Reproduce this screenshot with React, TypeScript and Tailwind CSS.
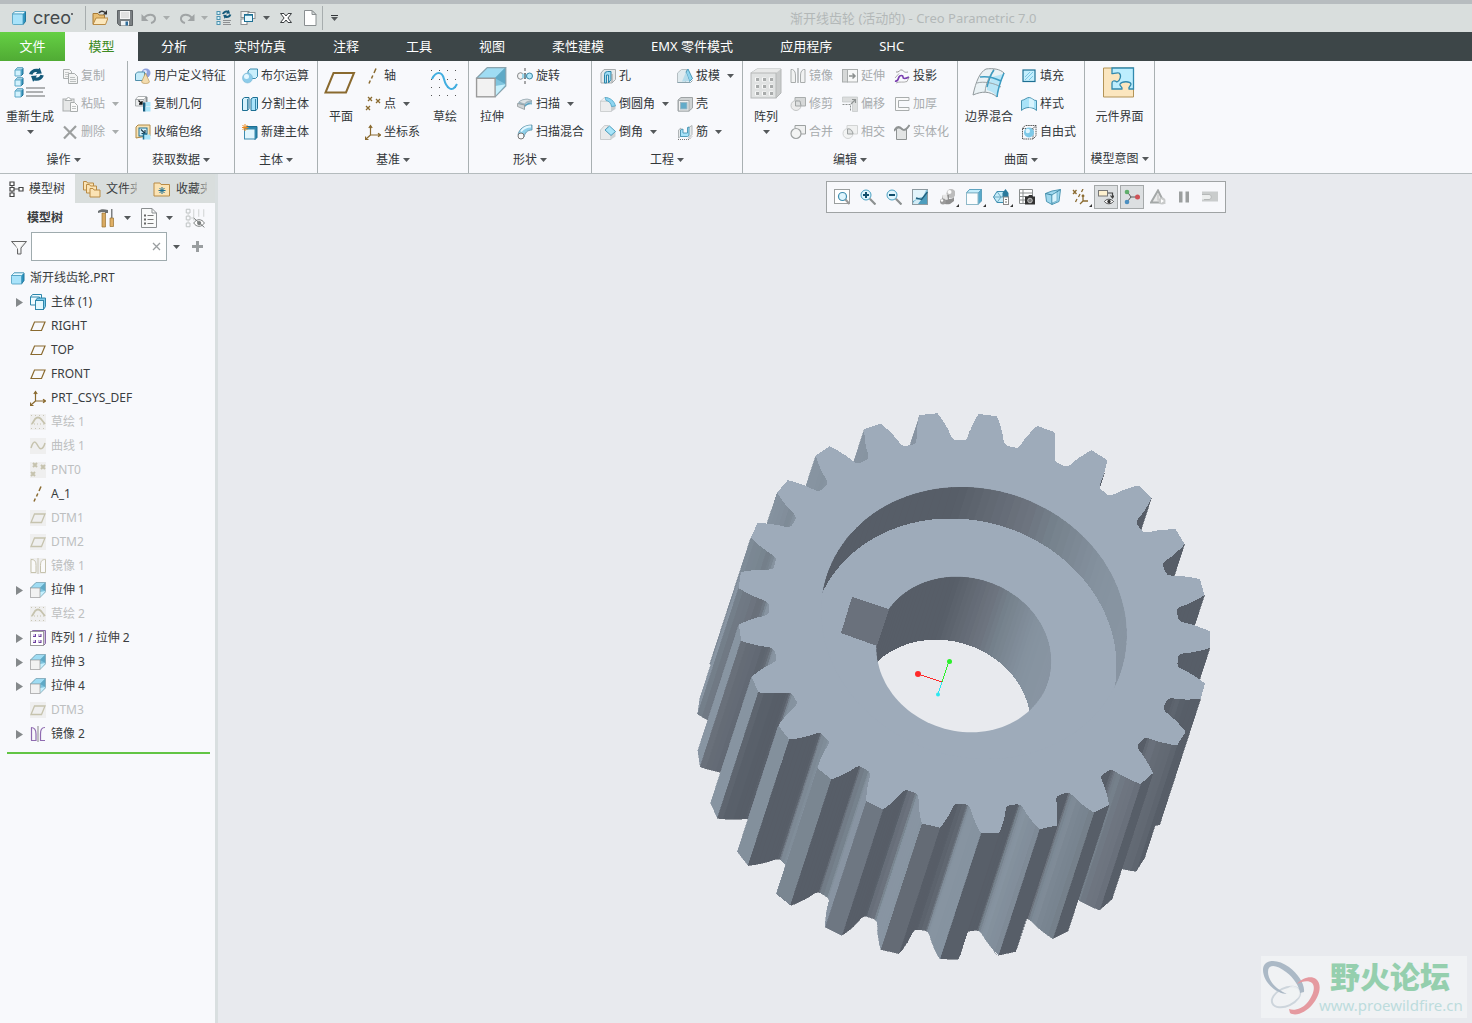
import React from 'react';

type Pt = [number, number];

/* ------------------------------------------------------------------ */
/* Icons                                                                */
/* ------------------------------------------------------------------ */

const B = '#1d6f93';
const L = '#a9e3fa';
const G = '#a9adad';
const GOLD = '#8a6a2f';
const DIM = '#c6c3ae';

function Svg({ s = 16, box = 16, children }: { s?: number; box?: number; children: React.ReactNode }) {
  return (
    <svg width={s} height={s} viewBox={`0 0 ${box} ${box}`} fill="none" className="shrink-0" aria-hidden="true">
      {children}
    </svg>
  );
}

const cubeShape = (x: number, y: number, s: number) => (
  <g stroke={B} strokeWidth="1" strokeLinejoin="round">
    <path d={`M${x} ${y + 2}l2-2h${s}v${s}l-2 2z`} fill="#3f9cc4" />
    <path d={`M${x} ${y + 2}l2-2h${s}l-2 2z`} fill="#e2f7ff" stroke="#5fa9c8" />
    <rect x={x} y={y + 2} width={s} height={s} fill="#d3f2fd" stroke="#5fa9c8" />
  </g>
);

const crosses = (c: string, w: number) => (
  <path d="M3 1l4 4M7 1l-4 4M11 3l4 4M15 3l-4 4M1 10l4 4M5 10l-4 4" stroke={c} strokeWidth={w} />
);

const refreshArrows = (
  <g fill="#155a7a">
    <path d="M0 4.500C1 1.500 4 0 7 .8l1-1 1.500 4.200-4.500.5 1-1.300C4.500 2.500 3 3.500 2.500 5z" />
    <path d="M11 5.500C10 8.500 7 10 4 9.200l-1 1L1.500 6l4.500-.5-1 1.300C6.500 7.500 8 6.500 8.500 5z" />
  </g>
);

const extrudeShape = (
  <>
    <path d="M.5 6L6 .5h9.500V10L10 15.500z" fill="#7fc4de" />
    <path d="M.5 6L6 .5h9.500L10 6z" fill="#9fdcf3" stroke="#5ba5c2" strokeWidth=".4" />
    <path d="M10 6L15.500.5V9z" fill="#5fa9c6" />
    <path d="M10 15.500V10L15.500 9z" fill="#c5f0fd" />
    <path d="M.5 6L6 .5h9.500V10L10 15.500" stroke="#8aa3ad" strokeWidth=".6" />
    <rect x=".5" y="6" width="9.500" height="9.500" fill="#f2f2f2" stroke="#9a9a9a" strokeWidth=".7" />
  </>
);

const icons: Record<string, React.ReactNode> = {
  cube: (
    <g strokeLinejoin="round">
      <path d="M1.500 4L4 1.500h10.500v10L12 14.500z" fill="#2e94c0" stroke="#21779c" />
      <path d="M1.500 4L4 1.500h10.500L12 4z" fill="#eafaff" stroke="#5aa7c6" strokeWidth=".7" />
      <rect x="1.500" y="4" width="10.500" height="10.500" rx="1" fill={L} stroke="#4a9dbf" strokeWidth=".8" />
    </g>
  ),
  part: (
    <g strokeLinejoin="round">
      <path d="M1.500 5.500L4 3h10v7.500L11.500 14z" fill="#2e94c0" stroke="#21779c" />
      <path d="M1.500 5.500L4 3h10l-2.500 2.500z" fill="#eafaff" stroke="#5aa7c6" strokeWidth=".7" />
      <rect x="1.500" y="5.500" width="10" height="8.500" rx="1" fill={L} stroke="#4a9dbf" strokeWidth=".8" />
    </g>
  ),
  folder: (
    <>
      <path d="M1 14V3.500h5l1 1.500h5.500v9z" fill="#e9bf74" stroke="#a77a35" />
      <path d="M1 14.500L4 8h12l-2.500 6.500z" fill="#fbe7bd" stroke="#b98b45" />
      <path d="M7 3c1-2 4-2.500 6-.5" stroke="#333" strokeWidth="1.500" />
      <path d="M15 0v4.500h-4z" fill="#333" />
    </>
  ),
  save: (
    <>
      <path d="M.5.5h15v15h-13l-2-2z" fill="#7b8083" stroke="#5d6265" />
      <rect x="3" y="1" width="10" height="8" fill="#f5f5f5" />
      <path d="M4 3h8M4 5h8M4 7h8" stroke="#ccc" />
      <rect x="4" y="11" width="8" height="4.500" fill="#eef2f4" />
      <rect x="8.500" y="11.500" width="2.500" height="4" fill="#2f6d9a" />
    </>
  ),
  undo: (
    <>
      <path d="M3 8c3-4.500 10-4.500 11 0 .5 2.500-1.500 4.500-4 5" stroke="#a0a4a5" strokeWidth="2" />
      <path d="M.5 4v7h7z" fill="#a0a4a5" />
    </>
  ),
  redo: (
    <>
      <path d="M13 8C10 3.500 3 3.500 2 8c-.5 2.500 1.500 4.500 4 5" stroke="#a0a4a5" strokeWidth="2" />
      <path d="M15.500 4v7h-7z" fill="#a0a4a5" />
    </>
  ),
  regenSmall: (
    <>
      <g fill="#d9f3fc" stroke="#4d93b0">
        <rect x="1" y="1.500" width="3" height="3" />
        <rect x="1" y="6.500" width="3" height="3" />
        <rect x="1" y="11.500" width="3" height="3" />
      </g>
      <g transform="translate(6 0) scale(.85)">{refreshArrows}</g>
      <path d="M7 10.500h8M7 12.500h7M7 14.500h8" stroke="#8d9092" />
    </>
  ),
  windows: (
    <>
      <rect x="1" y="1.500" width="8" height="6" fill="#eef0f0" stroke="#8a8f91" />
      <rect x="8" y="2.500" width="7" height="6" fill="#fff" stroke="#8a8f91" />
      <rect x="1" y="9" width="6" height="5.500" fill="#fff" stroke="#8a8f91" />
      <rect x="4.500" y="4.500" width="8" height="7" fill="#e2f7fe" stroke="#1d6f93" />
      <path d="M4 5h9" stroke="#1d6f93" strokeWidth="1.500" />
    </>
  ),
  closeX: (
    <path
      d="M2.500 3.500h3.500L8 6l2-2.500h3.500L9.900 8l3.600 4.500H10L8 10l-2 2.500H2.500L6.100 8z"
      fill="#fff"
      stroke="#3b3f41"
    />
  ),
  page: (
    <>
      <path d="M2.500.5h7.500l4 4v11h-11.500z" fill="#fff" stroke="#8a8f91" />
      <path d="M10 .5v4h4z" fill="#d8dcdd" stroke="#8a8f91" />
    </>
  ),
  copy: (
    <>
      <path d="M1.500 1.500h6l2 2v7h-8z" fill="#f5f5f5" stroke={G} />
      <path d="M3 4.500h4M3 6.500h4M3 8.500h3" stroke="#c8caca" />
      <path d="M6.500 5.500h6l3 3v7h-9z" fill="#f3f4f4" stroke={G} />
      <path d="M8 9.500h5M8 11.500h6M8 13.500h6" stroke="#bcc0c0" />
    </>
  ),
  paste: (
    <>
      <rect x="1" y="3" width="11" height="12" fill="#e6e7e7" stroke={G} />
      <path d="M3 4.500L6.500 1 10 4.500z" fill="#fff" stroke={G} />
      <path d="M8.500 6.500h4l3 3v6h-7z" fill="#fafafa" stroke={G} />
      <path d="M10 10.500h4M10 12.500h4" stroke="#c0c4c4" />
    </>
  ),
  del: <path d="M2 2.500l12 12M14 2L2 14.500" stroke="#9c9f9f" strokeWidth="2.200" />,
  udf: (
    <>
      <circle cx="11" cy="5" r="4.500" fill="#8fa1dd" />
      <circle cx="10" cy="4" r="2" fill="#dfe5fb" />
      <path d="M.5 6l2-2h7v7l-2 1.500h-7z" fill="#c4ebf9" stroke="#4f8fab" />
      <path d="M10.500 5l4 9c-1 2-7 2-8 0z" fill="#f3dcae" stroke="#b99659" strokeWidth=".7" />
    </>
  ),
  copyGeom: (
    <>
      <path d="M.5 3.500L3 .5h8.500L9 3.500z" fill="#fdfdfd" stroke="#9a9fa1" strokeWidth=".8" />
      <path d="M.5 3.500H9v6.500H.5z" fill="#e9ebec" stroke="#9a9fa1" strokeWidth=".8" />
      <path d="M3.500 4.500l3 3M7 5v3H4" stroke="#111" strokeWidth="1.300" />
      <rect x="8" y="6.500" width="2.500" height="9" fill="#155d80" />
      <path d="M10.500 1h2v5h-2z" fill="#8c9193" />
      <path d="M11 6h4.500v4H11zM10.500 10.500h5v5h-5z" fill="#abe6fa" />
    </>
  ),
  shrink: (
    <>
      <path d="M1 3l2-2h12v11h-3L1 14z" fill="#f8e3b5" stroke="#b08a45" />
      <rect x="4" y="4" width="8" height="8" fill="#d2f0fb" stroke={B} />
      <path d="M6 5.500l3.500 3.500M10 6v3.500H6.500" stroke="#1c3c4c" strokeWidth="1.200" />
      <rect x="9" y="10.500" width="6.500" height="5" fill="#abe6fa" />
      <path d="M8.500 15.500V10H12" stroke={B} strokeWidth="1.500" />
    </>
  ),
  bool: (
    <>
      <path d="M6 3l2-2h7.500v7.500l-2 2H6z" fill="#c9effc" stroke="#3d8db0" />
      <circle cx="5.500" cy="10" r="5" fill="#8dccea" stroke="#6fb1cf" strokeWidth=".5" />
      <circle cx="4.500" cy="8.500" r="2.500" fill="#e4f7ff" />
    </>
  ),
  split: (
    <>
      <path d="M.5 3l2-1.500H7v11L5.500 14.500h-5z" fill="#d5f1fb" stroke={B} />
      <path d="M9 3l2-1.500h4.500v11L14 14.500H9z" fill={L} stroke={B} />
      <path d="M5.500 3v11M13.500 3v11" stroke={B} strokeWidth=".8" />
    </>
  ),
  newBody: (
    <>
      <path d="M2.500 5l2-2.500h10.500v11L13 15.500z" fill="#2c86ac" stroke={B} />
      <rect x="2.500" y="5" width="10.500" height="10" fill="#e2f6fd" stroke="#3d8db0" />
      <path d="M3 0v7M-.5 3.500h7M.5 1l5 5M5.500 1l-5 5" stroke="#ee8a1e" strokeWidth="1" />
    </>
  ),
  axis: <path d="M11 .5L9 5M7.800 7.500L6.500 10.500M5.300 12.500L4 15.500" stroke={GOLD} strokeWidth="1.500" />,
  point: crosses(GOLD, 1.3),
  csys: (
    <path
      d="M5.500 11V2M5.500 11H15M5.500 11L1 15M3.800 4L5.500 1.500 7.200 4M13 9.200l2.500 1.800L13 12.800M.5 12.500v3h3"
      stroke={GOLD}
      strokeWidth="1.200"
    />
  ),
  plane: <path d="M4.500 4h10.500L11.500 12.500H1z" stroke={GOLD} strokeWidth="1.200" />,
  revolve: (
    <>
      <path d="M8 0v3M8 5v6M8 13v3" stroke="#555" />
      <ellipse cx="3.500" cy="8" rx="3" ry="3.300" fill="#f4f4f4" stroke="#85898a" />
      <path d="M5 5.500c3 1 4 1 6.500 0v5c-2.500-1-3.500-1-6.500 0" fill="#9bd6ec" />
      <circle cx="12.500" cy="8" r="3" fill="#b3e8fa" stroke="#3b87a5" />
      <path d="M8 5v6" stroke="#555" />
    </>
  ),
  sweep: (
    <>
      <path d="M2 5.500C6 2 12 2 15 4.500V8c-3-1.500-5-1-7 .5v5L1 10V7z" fill="#9dbccb" />
      <path d="M2 6C6 2.500 12 2.500 15 5c-3-.5-6 .5-7.500 3z" fill="#dde3e6" stroke="#8e989c" strokeWidth=".5" />
      <path d="M8 8.500c2-1.500 4-2 7-1V8.500c-3-.5-5 .5-7 2.500z" fill="#5aa2c0" />
      <path d="M.5 7.500l7 1.500v4.500l-7-3z" fill="#cfd4d6" stroke="#8a8f91" strokeWidth=".7" />
    </>
  ),
  blend: (
    <>
      <path d="M1 11C2 5 7 1 15 1v5c-5 0-7 3-8 7z" fill="#8fd0ea" stroke="#5a8ea3" strokeWidth=".8" />
      <path d="M4 7.500c2-3 5-5 10-5" stroke="#e4f8ff" strokeWidth="1.800" />
      <circle cx="4" cy="12" r="3" fill="#fafafa" stroke="#777" />
    </>
  ),
  hole: (
    <>
      <path d="M1 5l3-3.500h11.500v10L12 15H1z" fill="#e6e9ea" stroke="#a9adaf" />
      <path d="M4.500 15V6.500a3 3 0 0 1 3-3h3.500v8L8.500 15V7h-2v8z" fill="#9edcf4" stroke="#2b85a9" />
      <path d="M12 6v8.500" stroke="#999" />
    </>
  ),
  round: (
    <>
      <path d="M.5 5h7c2.500 0 4 2 4 4v6.500H.5z" fill="#ecedee" stroke="#c4c8c9" strokeWidth=".8" />
      <path d="M.5 5l4-3.500H8L7.500 5z" fill="#f3f4f5" stroke="#c4c8c9" strokeWidth=".6" />
      <path d="M15.500 10v3L11.500 15.500V10z" fill="#c9cdcf" />
      <path d="M5 1.500c5 0 9.500 3.500 10.500 8.500l-4 .5C11 7 9 5 6 4.500z" fill="#8ed5f1" stroke="#3f9cc0" strokeWidth=".7" />
    </>
  ),
  chamfer: (
    <>
      <path d="M.5 6l4-4.500h4L6 6l5 5v4.500H.5z" fill="#e8eaeb" stroke="#c0c4c5" strokeWidth=".8" />
      <path d="M11 15.500V11l4.500-3v4.500z" fill="#cfd3d5" />
      <path d="M9.500 2l6 5.500-4.500 4-6-5.500z" fill="#a8e5fa" stroke="#2f89ad" strokeWidth=".8" />
    </>
  ),
  draft: (
    <>
      <path d="M.5 5l4-3.500H10l-1.500 13h-8z" fill="#dfeaee" stroke="#b5bec2" />
      <path d="M.5 14.500h13l2-2" stroke="#8ba3ad" />
      <path d="M9 4l2-3 4.500 9.500-3 3z" fill="#8fd4ef" stroke="#3388aa" strokeWidth=".8" />
      <path d="M9 4L5 13.500h7.500z" fill="#b5dceb" />
    </>
  ),
  shell: (
    <>
      <path d="M1 4l3-2.500h11.500V12L12 15H1z" fill="#ced2d3" stroke="#9ea3a5" />
      <rect x="1.500" y="4.500" width="10.500" height="10.500" fill="#f0f1f1" stroke="#a6abad" />
      <rect x="3.500" y="6.500" width="6.500" height="6.500" fill="#62abc9" stroke="#9bb9c6" />
    </>
  ),
  rib: (
    <>
      <path d="M1 15.500h11l3-3" stroke="#777" strokeDasharray="1 1" />
      <path d="M1.500 6L4 4v8l-2.500 2zM11 4l4-2.500v9l-4 4" fill="#e7eaeb" stroke="#b0b5b7" />
      <path d="M3.500 6L6 5v4h4.500V3.500L12 3v8.500l-1.500 1h-7z" fill="#a8e4fa" stroke="#3388aa" strokeWidth=".8" />
    </>
  ),
  mirrorG: (
    <>
      <path d="M8 0v15" stroke="#9a9e9f" strokeWidth="1.200" />
      <path d="M1 1.500h1.500C5 2.500 5.500 5 5.500 8v6.500H1zM15 1.500h-1.500c-2.500 1-3 3.500-3 6.500v6.500H15z" fill="#f1f2f2" stroke={G} />
    </>
  ),
  trim: (
    <>
      <path d="M5 1.500h10.500V10H5z" fill="#d6d8d8" stroke={G} />
      <circle cx="6" cy="9.500" r="5" fill="#ececec" stroke="#c4c6c6" />
      <path d="M5.500 5h4.500l1 5H5.500z" stroke="#a0a4a4" fill="#dcdede" />
    </>
  ),
  merge: (
    <>
      <path d="M5 4.500v-3h10.500V10H11" stroke="#9da1a1" fill="#eff0f0" />
      <circle cx="6" cy="9.500" r="5" fill="#f3f4f4" stroke="#9da1a1" strokeWidth="1.200" />
    </>
  ),
  intersect: (
    <>
      <path d="M5 1.500h10.500V10H5z" fill="#f0f1f1" stroke="#d2d4d4" />
      <circle cx="6" cy="9.500" r="5" stroke="#d2d4d4" fill="#f3f4f4" />
      <path d="M5.500 5c3-.5 5 2 5.500 5H5.500z" fill="#dfe1e1" stroke="#9da1a1" />
    </>
  ),
  extend: (
    <>
      <rect x=".5" y="1.500" width="5" height="12.500" fill="#d6d8d8" stroke={G} />
      <rect x="5.500" y="1.500" width="10" height="12.500" fill="#f7f8f8" stroke={G} />
      <path d="M7 8h6M10.500 5.500L13 8l-2.500 2.500" stroke="#8c9090" strokeWidth="1.500" />
    </>
  ),
  offset: (
    <>
      <path d="M.5 1h15v14.500h-5V6H.5z" fill="#dcdede" stroke="#c2c5c5" strokeWidth=".7" />
      <path d="M.5 8.500h8v7" stroke="#8f9393" strokeDasharray="2 1" />
      <path d="M9 8l4-4M10 3.500h3.500V7" stroke="#8f9393" strokeWidth="1.200" />
    </>
  ),
  project: (
    <>
      <path d="M2 4c3 1 4-3 6-2s2 3 6 2" stroke="#999" />
      <path d="M1 13c3 1 3-2 4-4s4-2 4 0 2 2 6 0" stroke="#7a3fb0" strokeWidth="1.700" />
      <path d="M1 10L5 5.500M15 9.500l-2 4" stroke="#999" strokeWidth=".8" />
      <path d="M2 15c4-2 7 0 11-1.500" stroke="#9a9a9a" strokeWidth=".8" />
    </>
  ),
  thicken: <path d="M1.500 1.500H15v3H4.500v7H15v3H1.500z" fill="#fafafa" stroke="#a9adad" />,
  solidify: (
    <>
      <path d="M2.500 5v10.500h10V5C10 9 6 1 2.500 5z" fill="#e2e4e4" stroke="#8f9393" />
      <path d="M0 7C3 1 6 3 8 5s5 0 7.500-4" stroke="#8f9393" strokeWidth="1.800" />
    </>
  ),
  fill: (
    <>
      <rect x="2" y="2" width="12" height="11.500" fill="#c4effd" stroke={B} strokeWidth="1.200" />
      <path d="M4 9l5-5M4 12l8-8M8 12l4-4" stroke="#7cc7e4" />
    </>
  ),
  style: (
    <>
      <path d="M.5 4.500C4 4 6 1 8.500 1.500S13 5 15.500 4.500v10c-4-4-11-4-15 0z" fill="#a8e3f9" stroke="#4a93b0" />
      <path d="M8 3c2-1 3 0 5 1.500v7H8z" fill="#eafaff" opacity=".7" />
    </>
  ),
  freestyle: (
    <>
      <path
        d="M1.500 4l3-2.500h10.500V12l-3 3H1.500zM12 15V4.500M1.500 4.500H12l3-3"
        stroke="#444"
        strokeWidth=".9"
        strokeDasharray="1.500 .7"
      />
      <circle cx="8" cy="8.500" r="5" fill="#7ec9e8" />
      <circle cx="6.800" cy="7" r="2.200" fill="#dff6ff" />
    </>
  ),
  treeTab: (
    <>
      <path d="M3 4v8M3 8h7" stroke="#555" />
      <path d="M1 1h4v3.500H1zM1 6.500h4V10H1zM1 12h4v3.500H1zM10 6.500h4V10h-4z" fill="#fff" stroke="#444" strokeWidth="1.200" />
    </>
  ),
  bodies: (
    <>
      <path d="M.5 3l2-2.500h9V9l-2 2h-9z" fill="#effbff" stroke="#2d86ab" />
      <path d="M.5 3h9v8" stroke="#2d86ab" />
      <path d="M5.500 6.500l2-2.500h8v8.500l-2 3z" fill="#7cc9e8" stroke="#2d86ab" />
      <rect x="5.500" y="6.500" width="8" height="9" fill="#e2f8ff" stroke="#2d86ab" />
    </>
  ),
  sketchDim: (
    <>
      <rect width="16" height="16" fill="#efefef" />
      <path d="M1 1.500h15M1 14.500h15" stroke="#c9c6b6" strokeDasharray="1 3" />
      <path d="M2 10l3-5c2-2 4-2 6 0l4 5" stroke={DIM} strokeWidth="1.800" />
      <path d="M1 10h14" stroke={DIM} strokeDasharray="1 2" />
    </>
  ),
  curveDim: (
    <>
      <rect width="16" height="16" fill="#efefef" />
      <path d="M1 10C4 1 6 4 8 8s5 4 7-3" stroke={DIM} strokeWidth="1.500" />
    </>
  ),
  pointDim: (
    <>
      <rect width="16" height="16" fill="#efefef" />
      {crosses(DIM, 2)}
    </>
  ),
  planeDim: (
    <>
      <rect width="16" height="16" fill="#efefef" />
      <path d="M4.500 4h10.500L11.500 12.500H1z" stroke={DIM} strokeWidth="1.300" />
    </>
  ),
  mirrorDim: (
    <>
      <rect width="16" height="16" fill="#efefef" />
      <path d="M8 0v16" stroke="#c9c6b6" />
      <path d="M1 1.500c3 0 5 1 5 6v7H1zM15.500 1.500c-3 0-5 1-5 6v7h5z" fill="#fafafa" stroke={DIM} />
    </>
  ),
  mirror: (
    <>
      <path d="M8 0v16" stroke="#888" />
      <path
        d="M1.500 1.500v13M15 14.500h-4.500V8c0-4 1-6.500 4.500-6.500M1 1.500c3 0 5 2.500 5 6.500v6.500H1"
        stroke="#8f6bb0"
        strokeWidth="1.200"
      />
    </>
  ),
  extrude: extrudeShape,
  pattern: (
    <>
      <path d="M.5 2.500l2-2h13v13l-2 2" stroke="#8a6ba8" fill="#cdbddc" />
      <rect x=".5" y="1.500" width="13" height="14" fill="#fff" stroke="#9b9b9b" />
      <path d="M3 5.500h3M8.500 5.500h3M3 11.500h3M8.500 11.500h3" stroke="#6d3fa0" strokeWidth="3" />
      <path d="M3 5h2M8.500 5h2M3 11h2M8.500 11h2" stroke="#d9cbe8" strokeWidth="2" />
    </>
  ),
  funnel: (
    <>
      <path d="M.5 2.500h15L10 9v6H6.500V9z" fill="#e6e8e9" stroke="#666" />
      <path d="M3 3h10L9 8v6" fill="#fafafa" />
    </>
  ),
  eyeTree: (
    <>
      <path d="M1 1h3v3H1zM1 6.500h3v3H1zM1 12h3v3H1z" stroke="#bfc3c3" strokeWidth=".8" />
      <path d="M2.500 4v2.500M2.500 9.500V12M4 8h3M7 1v9M11 1v6M15 1v6" stroke="#d0d3d3" strokeWidth=".8" />
      <path d="M7 12c2-3.500 6.500-3.500 8.500 0-2 3.500-6.500 3.500-8.500 0z" fill="#fff" stroke="#7d8080" strokeWidth=".8" />
      <circle cx="11.300" cy="12" r="1.700" fill="#7d8080" />
      <path d="M7 8l8.500 7.500" stroke="#7d8080" strokeWidth=".8" />
    </>
  ),
  /* graphics toolbar */
  refit: (
    <>
      <rect x=".5" y=".5" width="15" height="14" fill="#fff" stroke="#9b9f9f" />
      <circle cx="8.500" cy="7.500" r="4" fill="#dff5fd" stroke="#3d8db0" strokeWidth="1.200" />
      <path d="M11.500 10.500l4 4.500" stroke="#9a9a9a" strokeWidth="2.200" />
    </>
  ),
  zoomIn: (
    <>
      <circle cx="6" cy="6" r="5" fill="#e2f6fd" stroke="#48a0c2" />
      <path d="M3 6h6M6 3v6" stroke="#114f6d" strokeWidth="2" />
      <path d="M9.800 9.800l5.700 5.700" stroke="#8c9090" strokeWidth="2.200" />
    </>
  ),
  zoomOut: (
    <>
      <circle cx="6" cy="6" r="5" fill="#e2f6fd" stroke="#48a0c2" />
      <path d="M3 6h6" stroke="#114f6d" strokeWidth="2" />
      <path d="M9.800 9.800l5.700 5.700" stroke="#8c9090" strokeWidth="2.200" />
    </>
  ),
  repaint: (
    <>
      <rect x=".5" y=".5" width="15" height="15" fill="#4d9dbd" stroke="#8e9aa0" />
      <path d="M1 1h14.500v3L10 10 1 12z" fill="#8fcbe2" />
      <path d="M1 1h13L11 8c-4 0-6 2-10 4z" fill="#e2f4fb" />
      <path d="M15.500 3L9.500 10.500 4 9" stroke="#1e5f7d" strokeWidth="1.500" />
      <path d="M1 15c0-3 3-5 8-4L6 15z" fill="#d3ecf6" />
    </>
  ),
  shading: (
    <>
      <circle cx="12" cy="4.500" r="4.500" fill="#bcbcbc" />
      <circle cx="10.500" cy="3" r="2" fill="#fafafa" />
      <path d="M3 6h7v4c3 0 4-1 5-2v4l-4 3c-5 1-9-1-8-4z" fill="#8f8f8f" />
      <path d="M3 6l5-.5 1 5-5 1z" fill="#e6e6e6" />
      <circle cx="4" cy="12.500" r="3" fill="#9b9b9b" />
      <circle cx="3" cy="11.500" r="1.200" fill="#fff" />
    </>
  ),
  display: (
    <>
      <path d="M.5 4l3-3.500h12V12L12 15.500z" fill="#58a9ca" stroke="#4b95b4" strokeWidth=".8" />
      <path d="M.5 4l3-3.500h12L12 4z" fill="#c4edfb" stroke="#4b95b4" strokeWidth=".7" />
      <rect x=".5" y="4" width="11.500" height="11.500" fill="#fbfdfe" stroke="#8fb9c9" />
    </>
  ),
  saved: (
    <>
      <path d="M4 2.500h8l3 5.500-3 5.500H4L.5 8z" fill="#c5ecf9" stroke="#3d8db0" />
      <path d="M.5 8H13M4 2.500L8 8l-4 5.500" stroke="#5a9ab5" strokeWidth=".8" />
      <path d="M12.500 0l3 4v4h-6V4z" fill="#2a7a9c" />
      <rect x="10.500" y="8" width="5" height="7.500" fill="#fff" stroke="#888" />
      <path d="M12 10.500h2M12 13h2" stroke="#777" />
    </>
  ),
  layers: (
    <>
      <path d="M.5.500h13v14H.5zM.5 4h13M.5 7.500h13M.5 11h6M4 .5v14" fill="#fff" stroke="#8b8f8f" />
      <path d="M6 7.500h3l1-1.500h3l1 1.500h2v8H6z" fill="#333" />
      <circle cx="11" cy="11.500" r="2.300" fill="#777" stroke="#ddd" strokeWidth=".8" />
    </>
  ),
  persp: (
    <>
      <path d="M.5 4.500L7 2l8.500-1.500-1.500 12-7 3-5.500-3z" fill="#9fd8ee" stroke="#4f97b3" />
      <path d="M.5 4.500L7 6l8.500-5.500M7 6v9.500" stroke="#3c86a4" />
      <path d="M7 6l5-3v9l-5 2z" fill="#d9f3fc" stroke="#4f97b3" strokeWidth=".6" />
    </>
  ),
  datum: (
    <path
      d="M1 1l3.500 4M4.500 1L1 5M11 0L9.500 3M8 5L6.500 8M5 10l-1.500 3M11 6v6h5M11 12l-3 3M9.800 7.500L11 6l1.200 1.500"
      stroke={GOLD}
      strokeWidth="1.300"
    />
  ),
  annot: (
    <>
      <rect x=".5" y="1.500" width="9" height="5.500" fill="#fdf0cf" stroke="#777" />
      <path d="M10 4h4.500v5M12.500 6.500l2 2.500 1.500-2.500" stroke="#444" strokeWidth="1.200" />
      <path d="M6.500 12.500c2-3 6.500-3 9 0-2.500 3-7 3-9 0z" fill="#fff" stroke="#444" />
      <circle cx="11" cy="12.500" r="1.700" fill="#333" />
    </>
  ),
  spin: (
    <>
      <path d="M3.500 3L7 8l-4 5M7 8h7" stroke="#5a5a5a" />
      <circle cx="3" cy="3" r="2.300" fill="#5fae6a" />
      <circle cx="3" cy="13" r="2.300" fill="#4c8fc0" />
      <circle cx="13.500" cy="8" r="2.500" fill="#cf5257" />
    </>
  ),
  simulate: (
    <>
      <path d="M8 1.500L1 13.500h13z" stroke="#a4a8a8" strokeWidth="2" fill="#e8e9e9" />
      <path d="M8 5.500v6" stroke="#bbb" />
      <circle cx="12" cy="12" r="3.500" fill="#c8caca" />
      <path d="M11 10l3 2-3 2z" fill="#fff" />
    </>
  ),
  pause: <path d="M3 2.500h3.500v11H3zM9.500 2.500H13v11H9.500z" fill="#9c9f9f" />,
  resume: (
    <>
      <path d="M0 2.500h16v10H0z" fill="#c9cccc" />
      <path d="M0 5.500h7c3 0 3 5 0 5H0z" fill="#eceeee" />
      <path d="M0 5.500h7c3 0 3 5 0 5H2" stroke="#b5b8b8" />
    </>
  ),
};

function Icon({ name, s = 16 }: { name: string; s?: number }) {
  return <Svg s={s}>{icons[name]}</Svg>;
}

const bigIcons: Record<string, React.ReactNode> = {
  regen: (
    <>
      {cubeShape(2, 2, 6)}
      {cubeShape(2, 12, 6)}
      {cubeShape(2, 23, 6)}
      <g transform="translate(16 2) scale(1.35)">{refreshArrows}</g>
      <path d="M13 22h19M13 26h17M13 30h19" stroke="#97999b" strokeWidth="1.500" />
    </>
  ),
  plane: <path d="M9.500 7h20.500L22 26.500H1.500z" stroke={GOLD} strokeWidth="2" />,
  sketch: (
    <>
      <path d="M3 4.500h28M3 13.500h28M3 21.500h28M3 29.500h28" stroke="#555" strokeDasharray="1 7" />
      <path d="M4 13C8 5 14 5 16 13S24 28 29 18" stroke="#41aee0" strokeWidth="2" />
    </>
  ),
  extrude: <g transform="scale(1.95) translate(.3 .3)">{extrudeShape}</g>,
  pattern: (
    <>
      <path d="M2 7l6-4h24v24l-5 5z" fill="#c9cbcb" stroke="#b3b6b6" />
      <path d="M2 7l6-4h24l-5 4z" fill="#e8e9e9" />
      <rect x="2" y="7" width="25" height="25" fill="#e0e2e2" stroke="#b5b8b8" />
      <path d="M6 13.500h18M6 20.500h18M6 27.500h18" stroke="#fafafa" strokeWidth="4" strokeDasharray="4 3" />
      <path d="M7 13.500h18M7 20.500h18M7 27.500h18" stroke="#a8abab" strokeWidth="3" strokeDasharray="3 4" />
    </>
  ),
  boundary: (
    <>
      <path d="M1 29C4 15 8 6 14 3c7-1 14 0 18 4-3 7-6 14-7 24-7-6-15-6-24-2z" fill="#eaf2f5" stroke="#91999c" />
      <path d="M15 22l5-11 11-3-6 22c-3-3-6-5-10-6z" fill="#b8e5f6" />
      <path d="M5 17c7-2 17 0 24 4M22 3c-5 8-8 14-9 23" stroke="#9aa3a6" />
      <path d="M32 7c-3 7-6 14-7 24M22 4c-3 4-5 9-7 17M8 11c7-1 13 0 21 4" stroke="#3c9cc2" strokeWidth="1.500" />
    </>
  ),
  iface: (
    <>
      <path d="M1.500 2h30v29h-30z" fill="#fbe6bf" stroke="#b39457" />
      <path
        d="M10 2v5c-1 2 4-1 7 0 3 2 1 8-2 9-3-2-5-1-5 1v6h10c1-2-3-3-2-5 2-3 10-3 11 0 0 2-3 3-2 5h4.500V2z"
        fill="#bdeefe"
        stroke="#3089ae"
        strokeWidth="1.300"
      />
    </>
  ),
};

/* ------------------------------------------------------------------ */
/* Ribbon                                                               */
/* ------------------------------------------------------------------ */

function Caret({ dim = false }: { dim?: boolean }) {
  return (
    <svg width="7" height="4" viewBox="0 0 7 4" className="shrink-0" aria-hidden="true">
      <path d="M0 0h7L3.500 4z" fill={dim ? '#a9adad' : '#55595b'} />
    </svg>
  );
}

interface Cmd {
  icon: string;
  label: string;
  menu?: boolean;
  off?: boolean;
}

function Column({ items, className = '' }: { items: Cmd[]; className?: string }) {
  return (
    <div className={`flex flex-col pt-px ${className}`}>
      {items.map((c) => (
        <button
          key={c.label}
          type="button"
          disabled={c.off}
          className={`flex h-7 items-center gap-[3px] whitespace-nowrap ${c.off ? 'text-[#a7abad]' : 'text-[#33373a]'}`}
        >
          <Icon name={c.icon} />
          <span>{c.label}</span>
          {c.menu && (
            <span className="ml-1">
              <Caret dim={c.off} />
            </span>
          )}
        </button>
      ))}
    </div>
  );
}

function Big({ icon, label, menu, className = '' }: { icon: string; label: string; menu?: boolean; className?: string }) {
  return (
    <button type="button" className={`flex flex-col items-center whitespace-nowrap pt-[5px] ${className}`}>
      <Svg s={34} box={34}>
        {bigIcons[icon]}
      </Svg>
      <span className="mt-2 leading-[18px]">{label}</span>
      {menu && (
        <span className="mt-1">
          <Caret />
        </span>
      )}
    </button>
  );
}

function Group({ title, className = '', children }: { title: string; className?: string; children: React.ReactNode }) {
  return (
    <section className={`flex shrink-0 flex-col border-r border-[#a9b0b2] ${className}`}>
      <div className="flex h-[85px]">{children}</div>
      <button type="button" className="flex h-7 items-center justify-center gap-[3px] whitespace-nowrap">
        {title}
        <Caret />
      </button>
    </section>
  );
}

function Ribbon() {
  return (
    <div className="flex h-[113px] overflow-hidden border-b border-[#b4bbbd] bg-[#f8f9fc] text-xs text-[#33373a]">
      <Group title="操作" className="w-32">
        <Big icon="regen" label="重新生成" menu className="ml-1.5" />
        <Column
          className="ml-2"
          items={[
            { icon: 'copy', label: '复制', off: true },
            { icon: 'paste', label: '粘贴', off: true, menu: true },
            { icon: 'del', label: '删除', off: true, menu: true },
          ]}
        />
      </Group>
      <Group title="获取数据" className="w-[107px]">
        <Column
          className="ml-[7px]"
          items={[
            { icon: 'udf', label: '用户定义特征' },
            { icon: 'copyGeom', label: '复制几何' },
            { icon: 'shrink', label: '收缩包络' },
          ]}
        />
      </Group>
      <Group title="主体" className="w-[83px]">
        <Column
          className="ml-[7px]"
          items={[
            { icon: 'bool', label: '布尔运算' },
            { icon: 'split', label: '分割主体' },
            { icon: 'newBody', label: '新建主体' },
          ]}
        />
      </Group>
      <Group title="基准" className="w-[151px]">
        <Big icon="plane" label="平面" className="ml-1.5" />
        <Column
          className="ml-[7px]"
          items={[
            { icon: 'axis', label: '轴' },
            { icon: 'point', label: '点', menu: true },
            { icon: 'csys', label: '坐标系' },
          ]}
        />
        <Big icon="sketch" label="草绘" className="ml-2" />
      </Group>
      <Group title="形状" className="w-[123px]">
        <Big icon="extrude" label="拉伸" className="ml-1.5" />
        <Column
          className="ml-2"
          items={[
            { icon: 'revolve', label: '旋转' },
            { icon: 'sweep', label: '扫描', menu: true },
            { icon: 'blend', label: '扫描混合' },
          ]}
        />
      </Group>
      <Group title="工程" className="w-[151px]">
        <Column
          className="ml-2 w-[77px]"
          items={[
            { icon: 'hole', label: '孔' },
            { icon: 'round', label: '倒圆角', menu: true },
            { icon: 'chamfer', label: '倒角', menu: true },
          ]}
        />
        <Column
          items={[
            { icon: 'draft', label: '拔模', menu: true },
            { icon: 'shell', label: '壳' },
            { icon: 'rib', label: '筋', menu: true },
          ]}
        />
      </Group>
      <Group title="编辑" className="w-[215px]">
        <Big icon="pattern" label="阵列" menu className="ml-1.5" />
        <Column
          className="ml-[7px] w-[52px]"
          items={[
            { icon: 'mirrorG', label: '镜像', off: true },
            { icon: 'trim', label: '修剪', off: true },
            { icon: 'merge', label: '合并', off: true },
          ]}
        />
        <Column
          className="w-[52px]"
          items={[
            { icon: 'extend', label: '延伸', off: true },
            { icon: 'offset', label: '偏移', off: true },
            { icon: 'intersect', label: '相交', off: true },
          ]}
        />
        <Column
          items={[
            { icon: 'project', label: '投影' },
            { icon: 'thicken', label: '加厚', off: true },
            { icon: 'solidify', label: '实体化', off: true },
          ]}
        />
      </Group>
      <Group title="曲面" className="w-[127px]">
        <Big icon="boundary" label="边界混合" className="ml-[7px]" />
        <Column
          className="ml-2"
          items={[
            { icon: 'fill', label: '填充' },
            { icon: 'style', label: '样式' },
            { icon: 'freestyle', label: '自由式' },
          ]}
        />
      </Group>
      <Group title="模型意图" className="w-[70px]">
        <Big icon="iface" label="元件界面" className="mx-auto" />
      </Group>
    </div>
  );
}

/* ------------------------------------------------------------------ */
/* Title bar and tabs                                                   */
/* ------------------------------------------------------------------ */

function Tool({ icon, label, className = '' }: { icon: string; label: string; className?: string }) {
  return (
    <button type="button" aria-label={label} className={`shrink-0 ${className}`}>
      <Icon name={icon} />
    </button>
  );
}

function TitleBar() {
  return (
    <header className="relative flex h-8 items-center border-t-4 border-[#b7bcbf] bg-[#d9dedd]">
      <div className="flex w-[86px] items-center border-r border-[#a7adae] pl-[11px]">
        <Icon name="cube" />
        <span className="ml-1.5 text-lg leading-6 text-[#45494c]" style={{ fontFamily: 'Inter, sans-serif' }}>
          creo
        </span>
        <span className="mb-2 h-0.5 w-0.5 rounded-full bg-[#45494c]" />
      </div>
      <Tool icon="folder" label="打开" className="ml-1.5" />
      <Tool icon="save" label="保存" className="ml-[9px]" />
      <Tool icon="undo" label="撤消" className="ml-2" />
      <button type="button" aria-label="撤消列表" className="ml-1.5"><Caret dim /></button>
      <Tool icon="redo" label="重做" className="ml-[9px]" />
      <button type="button" aria-label="重做列表" className="ml-1.5"><Caret dim /></button>
      <Tool icon="regenSmall" label="重新生成模型" className="ml-2" />
      <Tool icon="windows" label="窗口" className="ml-2" />
      <button type="button" aria-label="窗口列表" className="ml-[7px]"><Caret /></button>
      <Tool icon="closeX" label="关闭" className="ml-2" />
      <Tool icon="page" label="新建" className="ml-2" />
      <button
        type="button"
        aria-label="自定义快速访问工具栏"
        className="ml-1 flex h-6 flex-col items-center justify-center gap-px border-l border-[#a7adae] pl-2"
      >
        <span className="h-px w-[7px] bg-[#33373a]" />
        <Caret />
      </button>
      <h1 className="absolute left-[790px] top-0 whitespace-nowrap text-[13px] leading-7 text-[#b3b8b8]">
        渐开线齿轮 (活动的) - Creo Parametric 7.0
      </h1>
    </header>
  );
}

const tabs = ['分析', '实时仿真', '注释', '工具', '视图', '柔性建模', 'EMX 零件模式', '应用程序', 'SHC'];

function TabBar() {
  return (
    <nav className="flex h-[29px] bg-[#3d4648] pt-px text-[13px] text-white">
      <button type="button" className="-mt-px w-[65px] bg-gradient-to-b from-[#65d044] to-[#50ab34] pt-px">文件</button>
      <button type="button" className="-mt-px w-[73px] bg-[#f8f9fc] pt-px text-[#3d8a22]">模型</button>
      {tabs.map((t) => (
        <button key={t} type="button" className="whitespace-nowrap pl-[23px] pr-6">
          {t}
        </button>
      ))}
    </nav>
  );
}

/* ------------------------------------------------------------------ */
/* Model tree                                                           */
/* ------------------------------------------------------------------ */

interface Node {
  icon: string;
  label: string;
  open?: boolean;
  off?: boolean;
}

const nodes: Node[] = [
  { icon: 'bodies', label: '主体 (1)', open: true },
  { icon: 'plane', label: 'RIGHT' },
  { icon: 'plane', label: 'TOP' },
  { icon: 'plane', label: 'FRONT' },
  { icon: 'csys', label: 'PRT_CSYS_DEF' },
  { icon: 'sketchDim', label: '草绘 1', off: true },
  { icon: 'curveDim', label: '曲线 1', off: true },
  { icon: 'pointDim', label: 'PNT0', off: true },
  { icon: 'axis', label: 'A_1' },
  { icon: 'planeDim', label: 'DTM1', off: true },
  { icon: 'planeDim', label: 'DTM2', off: true },
  { icon: 'mirrorDim', label: '镜像 1', off: true },
  { icon: 'extrude', label: '拉伸 1', open: true },
  { icon: 'sketchDim', label: '草绘 2', off: true },
  { icon: 'pattern', label: '阵列 1 / 拉伸 2', open: true },
  { icon: 'extrude', label: '拉伸 3', open: true },
  { icon: 'extrude', label: '拉伸 4', open: true },
  { icon: 'planeDim', label: 'DTM3', off: true },
  { icon: 'mirror', label: '镜像 2', open: true },
];

function FolderTab({ many }: { many?: boolean }) {
  const one = (x: number, y: number) => (
    <path d={`M${x} ${y}v8h10v-7h-6l-1-1.500h-3z`} fill="#fbe3b4" stroke="#b98b45" />
  );
  return (
    <Svg s={18} box={18}>
      {many ? (
        <>
          {one(0.5, 2)}
          {one(3.5, 5)}
          {one(7, 9)}
        </>
      ) : (
        <>
          <path d="M1 3v13h15.500V4.500H8L7 3z" fill="#fbe3b4" stroke="#b98b45" />
          <path d="M9 7v7M5.500 10.500h7M6.500 8l5 5M11.500 8l-5 5" stroke="#1d6f93" />
        </>
      )}
    </Svg>
  );
}

function Sidebar() {
  return (
    <aside className="w-[218px] shrink-0 border-r-[3px] border-[#d9dfe0] bg-[#f8f9fc] text-xs text-[#3a3d40]">
      <div className="flex h-[29px] bg-[#d9dedd]">
        <button type="button" className="flex w-[75px] items-center gap-1 bg-[#f8f9fc] pl-[9px]">
          <Icon name="treeTab" />
          <span className="whitespace-nowrap">模型树</span>
        </button>
        <button type="button" className="relative flex w-[70px] items-center gap-[5px] overflow-hidden pl-2">
          <FolderTab many />
          <span className="w-[31px] overflow-hidden whitespace-nowrap">文件夹</span>
          <span className="absolute right-1 h-4 w-4 bg-gradient-to-r from-transparent to-[#d9dedd]" />
        </button>
        <button type="button" className="relative flex w-[70px] items-center gap-[5px] overflow-hidden pl-2">
          <FolderTab />
          <span className="w-[31px] overflow-hidden whitespace-nowrap">收藏夹</span>
          <span className="absolute right-1 h-4 w-4 bg-gradient-to-r from-transparent to-[#d9dedd]" />
        </button>
      </div>
      <div className="flex h-[29px] items-center pl-[27px]">
        <h2 className="w-[70px] font-bold">模型树</h2>
        <button type="button" aria-label="设置" className="shrink-0">
          <Svg s={20} box={20}>
            <path d="M1 3c3-2.500 6-2 10-1v3H8V4L5 4 1 5z" fill="#6c7072" />
            <path d="M5 5h3.500v14H5z" fill="#d9aa62" stroke="#9a7231" strokeWidth=".7" />
            <path d="M14 1h1.500v9H14z" fill="#7b7f81" />
            <path d="M13 10h3.500v8.500H13z" fill="#e0b066" stroke="#9a7231" strokeWidth=".7" />
          </Svg>
        </button>
        <span className="ml-[7px]"><Caret /></span>
        <button type="button" aria-label="显示" className="ml-2 shrink-0">
          <Svg s={20} box={20}>
            <path d="M2.500.5H13L17.500 5v14.500h-15z" fill="#f9fafa" stroke="#8a8e90" />
            <path d="M13 .5V5h4.500" stroke="#8a8e90" />
            <path d="M8.500 7.500h6M8.500 11.500h6M8.500 15.500h6" stroke="#777" />
            <path d="M5 7.500h2M5 11.500h2M5 15.500h2" stroke="#666" strokeWidth="2" />
          </Svg>
        </button>
        <span className="ml-[7px]"><Caret /></span>
        <button type="button" aria-label="树过滤器" className="ml-3 shrink-0">
          <Icon name="eyeTree" s={20} />
        </button>
      </div>
      <div className="flex h-[29px] items-center pl-[11px]">
        <Icon name="funnel" />
        <label className="ml-1 flex h-[29px] w-[136px] items-center border border-[#9fabae] bg-white pr-[5px]">
          <input type="text" aria-label="过滤" className="min-w-0 flex-1 outline-none" />
          <svg width="9" height="9" viewBox="0 0 9 9" aria-hidden="true">
            <path d="M1 1l7 7M8 1L1 8" stroke="#9a9ea0" strokeWidth="1.300" />
          </svg>
        </label>
        <span className="ml-1.5"><Caret /></span>
        <button type="button" aria-label="添加" className="ml-3">
          <svg width="11" height="11" viewBox="0 0 11 11" aria-hidden="true">
            <path d="M5.500 0v11M0 5.500h11" stroke="#9a9ea0" strokeWidth="3" />
          </svg>
        </button>
      </div>
      <ul className="mt-[5px]">
        <li>
          <button type="button" className="flex h-6 items-center gap-1 pl-[10px]">
            <Icon name="part" />
            渐开线齿轮.PRT
          </button>
        </li>
        {nodes.map((n, i) => (
          <li key={i}>
            <button
              type="button"
              className={`flex h-6 w-full items-center pl-4 ${n.off ? 'text-[#bdbfc0]' : 'text-[#3a3d40]'}`}
            >
              <span className="w-3.5 shrink-0">
                {n.open && (
                  <svg width="7" height="9" viewBox="0 0 7 9" aria-hidden="true">
                    <path d="M0 0l7 4.500L0 9z" fill="#85898b" />
                  </svg>
                )}
              </span>
              <Icon name={n.icon} />
              <span className="ml-[5px]">{n.label}</span>
            </button>
          </li>
        ))}
      </ul>
      <div className="ml-[7px] mr-[5px] mt-[6px] h-0.5 bg-[#62c544]" />
    </aside>
  );
}

/* ------------------------------------------------------------------ */
/* Spur gear, projected orthographically                                */
/* ------------------------------------------------------------------ */

const C: Pt = [974, 623];
const RA = 239;
const RB = 207;
const DEPTH: Pt = [-41, 126];
const TEETH = 25;
const FACE = '#9eabba';
const CANVAS = '#e8eaee';

/* Face-plane polar coordinates to screen, at a fraction of the gear's depth. */
function project(r: number, deg: number, depth = 0): Pt {
  const a = (deg * Math.PI) / 180;
  const u = RA * r * Math.cos(a);
  const v = RB * r * Math.sin(a);
  return [C[0] + 0.951 * u - 0.309 * v + DEPTH[0] * depth, C[1] + 0.309 * u + 0.951 * v + DEPTH[1] * depth];
}

const flank: Pt[] = [
  [2.2, 1], [2.8, 0.98], [3.3, 0.96], [3.8, 0.94], [4.3, 0.918], [4.6, 0.9],
  [4.8, 0.89], [5.1, 0.88], [5.5, 0.873], [6, 0.87], [7.2, 0.869],
];

const outline: Pt[] = [];
for (let i = 0; i < TEETH; i++) {
  const c = -1.6 + (360 / TEETH) * i;
  for (let k = flank.length - 2; k >= 0; k--) outline.push([flank[k][1], c - flank[k][0]]);
  for (let k = 0; k < flank.length; k++) outline.push([flank[k][1], c + flank[k][0]]);
}

const ramp: [number, number[]][] = [
  [0, [87, 94, 104]], [0.16, [96, 103, 113]], [0.4, [108, 115, 126]],
  [0.56, [118, 130, 141]], [0.83, [133, 146, 159]], [1, [136, 149, 162]],
];

function shade(nx: number): string {
  const t = Math.min(1, Math.max(0, -nx));
  let i = 1;
  while (i < ramp.length - 1 && ramp[i][0] < t) i++;
  const [t0, c0] = ramp[i - 1];
  const [t1, c1] = ramp[i];
  const f = (t - t0) / (t1 - t0);
  return `rgb(${c0.map((v, k) => Math.round(v + (c1[k] - v) * f)).join(',')})`;
}

const str = (pts: Pt[]) => pts.map((p) => `${p[0].toFixed(1)},${p[1].toFixed(1)}`).join(' ');

interface Wall {
  pts: string;
  color: string;
  order: number;
}

function walls(profile: Pt[], d0: number, d1: number, inward: boolean): Wall[] {
  const out: Wall[] = [];
  for (let i = 0; i < profile.length; i++) {
    const p = profile[i];
    const q = profile[(i + 1) % profile.length];
    const a = project(p[0], p[1], d0);
    const b = project(q[0], q[1], d0);
    const a2 = project(p[0], p[1], d1);
    const b2 = project(q[0], q[1], d1);
    const len = Math.hypot(b[0] - a[0], b[1] - a[1]) || 1;
    const sign = inward ? -1 : 1;
    const nx = (sign * (b[1] - a[1])) / len;
    const ny = (sign * -(b[0] - a[0])) / len;
    if (nx * DEPTH[0] + ny * DEPTH[1] <= 0) continue;
    out.push({
      pts: str([a, b, b2, a2]),
      color: shade(nx),
      order: (a[0] + b[0]) * DEPTH[0] + (a[1] + b[1]) * DEPTH[1],
    });
  }
  return out.sort((x, y) => x.order - y.order);
}

const circle = (r: number): Pt[] => Array.from({ length: 120 }, (_, i) => [r, i * 3] as Pt);
const ring = (r: number, depth: number) => str(circle(r).map((p) => project(p[0], p[1], depth)));

const POCKET = 0.647;
const BORE = 0.37;

function Walls({ list }: { list: Wall[] }) {
  return (
    <>
      {list.map((w, i) => (
        <polygon key={i} points={w.pts} fill={w.color} stroke={w.color} strokeWidth="0.6" />
      ))}
    </>
  );
}

function Gear() {
  return (
    <svg
      width="1254"
      height="849"
      viewBox="218 174 1254 849"
      shapeRendering="crispEdges"
      className="block max-w-none"
      role="img"
      aria-label="渐开线齿轮"
    >
      <defs>
        <clipPath id="pocket"><polygon points={ring(POCKET, 0)} /></clipPath>
        <clipPath id="bore"><polygon points={ring(BORE, 0.25)} /></clipPath>
      </defs>
      <Walls list={walls(outline, 0, 1, false)} />
      <polygon points={str(outline.map((p) => project(p[0], p[1])))} fill={FACE} />
      <g clipPath="url(#pocket)">
        <Walls list={walls(circle(POCKET), 0, 0.25, true)} />
        <polygon points={ring(POCKET, 0.25)} fill={FACE} />
      </g>
      <g clipPath="url(#bore)">
        <Walls list={walls(circle(BORE), 0.25, 0.75, true)} />
        <polygon points={ring(BORE, 0.75)} fill={CANVAS} />
      </g>
      <polygon points="852,597 889,609 877,646 841,633" fill="#6a717c" />
      <g strokeWidth="1">
        <path d="M918 674l24 8" stroke="#ff2a2a" />
        <path d="M949 661l-7 21" stroke="#2bf02b" />
        <path d="M942 682l-4 12" stroke="#2be8f0" />
      </g>
      <g shapeRendering="auto">
        <circle cx="918" cy="674" r="3" fill="#ff2a2a" />
        <circle cx="949.500" cy="661.500" r="2.500" fill="#2bf02b" />
        <circle cx="938" cy="694.500" r="2" fill="#2be8f0" />
      </g>
    </svg>
  );
}

/* ------------------------------------------------------------------ */
/* Canvas                                                               */
/* ------------------------------------------------------------------ */

const viewTools: { icon: string; label: string; on?: boolean; corner?: boolean }[] = [
  { icon: 'refit', label: '重新调整' },
  { icon: 'zoomIn', label: '放大' },
  { icon: 'zoomOut', label: '缩小' },
  { icon: 'repaint', label: '重画' },
  { icon: 'shading', label: '渲染选项', corner: true },
  { icon: 'display', label: '显示样式', corner: true },
  { icon: 'saved', label: '已保存方向', corner: true },
  { icon: 'layers', label: '视图管理器' },
  { icon: 'persp', label: '透视图' },
  { icon: 'datum', label: '基准显示', corner: true },
  { icon: 'annot', label: '注释显示', on: true },
  { icon: 'spin', label: '旋转中心', on: true },
  { icon: 'simulate', label: '模拟' },
  { icon: 'pause', label: '暂停' },
  { icon: 'resume', label: '恢复' },
];

function Viewport() {
  return (
    <main className="relative min-w-0 flex-1 overflow-hidden bg-[#e8eaee]">
      <Gear />
      <div className="absolute left-[608px] top-[7px] flex h-8 items-center gap-0.5 border border-[#9fa3a4] bg-[#f7f8fb] px-[3px]">
        {viewTools.map((t) => (
          <button
            key={t.label}
            type="button"
            aria-label={t.label}
            aria-pressed={!!t.on}
            className={`relative flex h-6 items-center justify-center ${t.corner ? 'w-[25px]' : 'w-6'} ${
              t.on ? 'border border-[#a5a9aa] bg-[#dcdfe1]' : ''
            }`}
          >
            <Icon name={t.icon} />
            {t.corner && (
              <svg width="3" height="3" viewBox="0 0 3 3" className="absolute bottom-0.5 right-0" aria-hidden="true">
                <path d="M3 0v3H0z" fill="#333" />
              </svg>
            )}
          </button>
        ))}
      </div>
      <div className="absolute bottom-[5px] right-[5px] flex h-[62px] w-[206px] items-center bg-[#f0f2f4]">
        <svg width="60" height="60" viewBox="0 0 60 60" fill="none" className="shrink-0" aria-hidden="true">
          <g fillRule="evenodd">
            <ellipse cx="25" cy="40" rx="15" ry="9" transform="rotate(-25 25 40)" stroke="#cdd5dc" strokeWidth="2" />
            <path d="M2 13C2 2 16 1 28 10c9 7 16 17 15 25l-4 1c-1-7-6-15-14-21C15 7 7 7 7 15c0 8 8 18 20 22-13 0-25-13-25-24z" fill="#abb9c6" />
            <path d="M36 27c5-6 14-9 19-5 7 6 3 18-4 26-6 7-16 12-22 8l-1-4c5 2 13 0 18-6 6-7 9-16 5-20-3-3-10-2-15 1z" fill="#e59aa0" />
            <circle cx="32" cy="36" r="7" fill="#f0f2f4" opacity=".8" />
          </g>
        </svg>
        <div className="-ml-0.5 flex flex-col whitespace-nowrap">
          <span className="pl-[11px] text-[30px] font-black leading-9 text-[#95cfae]">野火论坛</span>
          <a href="#forum" className="text-[15px] leading-5 text-[#bddcdd]">www.proewildfire.cn</a>
        </div>
      </div>
    </main>
  );
}

export default function App() {
  return (
    <div
      className="flex min-h-screen flex-col bg-[#f8f9fc]"
      style={{ fontFamily: '"Noto Sans", "Noto Sans CJK SC", sans-serif' }}
    >
      <TitleBar />
      <TabBar />
      <Ribbon />
      <div className="flex flex-1">
        <Sidebar />
        <Viewport />
      </div>
    </div>
  );
}
